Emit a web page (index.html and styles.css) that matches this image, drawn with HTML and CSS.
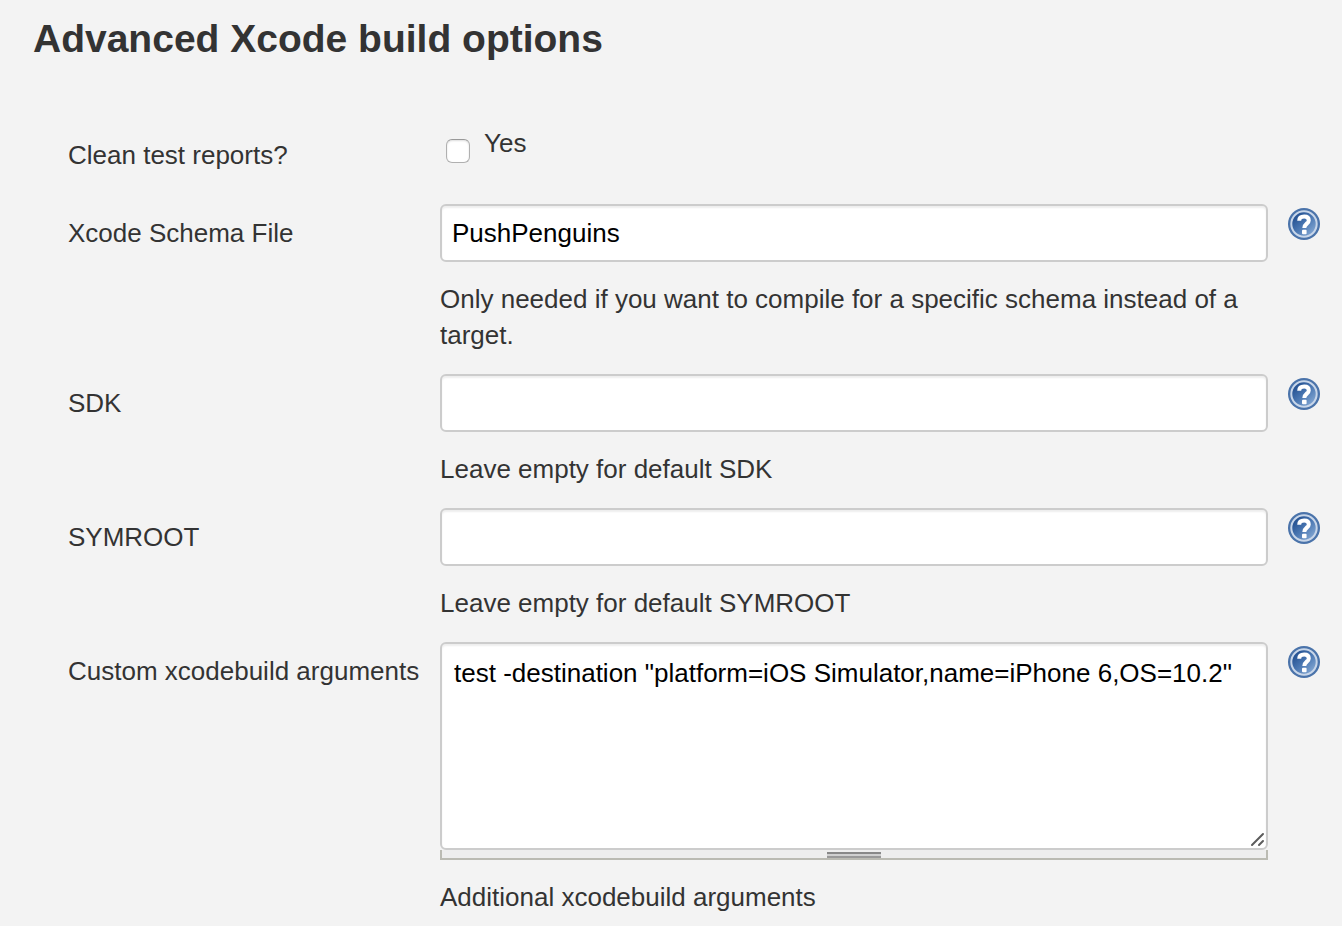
FILE: index.html
```html
<!DOCTYPE html>
<html lang="en">
<head>
<meta charset="utf-8">
<title>Advanced Xcode build options</title>
<link rel="stylesheet" href="styles.css">
</head>
<body>
<svg class="defs" width="0" height="0" aria-hidden="true">
  <defs>
    <linearGradient id="help-fill" x1="0" y1="0" x2="1" y2="1">
      <stop offset="0.15" stop-color="#224f90"/>
      <stop offset="0.5" stop-color="#4a77b2"/>
      <stop offset="0.9" stop-color="#86a9d4"/>
    </linearGradient>
    <symbol id="help-icon" viewBox="0 0 32 32">
      <circle cx="16" cy="16" r="16" fill="#4a73aa"/>
      <circle cx="16" cy="16" r="12.700" fill="url(#help-fill)" stroke="#c8d6e9" stroke-width="2"/>
      <path d="M11.200 12.800C11.200 9.600 13.200 8.600 16.200 8.600C19.400 8.600 20.800 10.200 20.800 12.400C20.800 15.600 16.300 15.800 16.300 20" fill="none" stroke="#fff" stroke-width="4"/>
      <rect x="14" y="21.800" width="4.600" height="4.400" rx="1" fill="#fff"/>
    </symbol>
  </defs>
</svg>
<main class="page">
  <h1 class="title">Advanced Xcode build options</h1>
  <form class="options">
    <div class="row row-check">
      <span class="label" id="clean-label">Clean test reports?</span>
      <div class="field">
        <label class="check"><input class="checkbox" type="checkbox" aria-describedby="clean-label"><span>Yes</span></label>
      </div>
    </div>
    <div class="row">
      <label class="label" for="schema">Xcode Schema File</label>
      <div class="field">
        <input class="text" id="schema" type="text" value="PushPenguins">
        <p class="hint">Only needed if you want to compile for a specific schema instead of a target.</p>
      </div>
      <button class="help" type="button" aria-label="Help for Xcode Schema File"><svg class="help-image"><use href="#help-icon"/></svg></button>
    </div>
    <div class="row">
      <label class="label" for="sdk">SDK</label>
      <div class="field">
        <input class="text" id="sdk" type="text">
        <p class="hint">Leave empty for default SDK</p>
      </div>
      <button class="help" type="button" aria-label="Help for SDK"><svg class="help-image"><use href="#help-icon"/></svg></button>
    </div>
    <div class="row">
      <label class="label" for="symroot">SYMROOT</label>
      <div class="field">
        <input class="text" id="symroot" type="text">
        <p class="hint">Leave empty for default SYMROOT</p>
      </div>
      <button class="help" type="button" aria-label="Help for SYMROOT"><svg class="help-image"><use href="#help-icon"/></svg></button>
    </div>
    <div class="row">
      <label class="label" for="arguments">Custom xcodebuild arguments</label>
      <div class="field">
        <div class="area-wrap">
          <textarea class="text area" id="arguments" spellcheck="false">test -destination "platform=iOS Simulator,name=iPhone 6,OS=10.2"</textarea>
          <svg class="grip" viewBox="0 0 16 16" aria-hidden="true"><path d="M2 13L13 2M9 13L13 9" fill="none" stroke="#5c5c5c" stroke-width="2" stroke-linecap="round"/></svg>
        </div>
        <div class="handle"><span class="handle-bar"></span></div>
        <p class="hint">Additional xcodebuild arguments</p>
      </div>
      <button class="help" type="button" aria-label="Help for Custom xcodebuild arguments"><svg class="help-image"><use href="#help-icon"/></svg></button>
    </div>
  </form>
</main>
</body>
</html>
```
FILE: styles.css
```css
* {
  box-sizing: border-box;
}

body {
  margin: 0;
  background: #f3f3f3;
  color: #333;
  font: 26px/36px "Liberation Sans", Arial, sans-serif;
}

.defs {
  position: absolute;
}

.page {
  padding: 15px 22px 0 33px;
}

.title {
  margin: 0 0 62px;
  font-size: 39px;
  line-height: 48px;
}

.options {
  display: flex;
  flex-direction: column;
  gap: 21px;
  padding-left: 35px;
}

.row {
  display: grid;
  grid-template-columns: 352px minmax(0, 1fr) 32px;
  column-gap: 20px;
  align-items: start;
}

.row-check {
  min-height: 58px;
}

.label {
  padding-top: 11px;
  white-space: nowrap;
}

.row-check .label {
  padding-top: 12px;
}

.check {
  display: inline-flex;
  align-items: flex-start;
  gap: 14px;
  padding-left: 6px;
}

.checkbox {
  appearance: none;
  width: 24px;
  height: 24px;
  margin: 14px 0 0;
  border: 1px solid #b0b0b0;
  border-top-color: #999;
  border-radius: 6px;
  background: #fff;
  box-shadow: inset 0 1px 2px #ddd;
}

.checkbox:checked {
  background: #3b67a3;
}

.text {
  display: block;
  width: 100%;
  height: 58px;
  margin: 0;
  padding: 0 10px;
  border: 2px solid #ccc;
  border-radius: 6px;
  background: #fff;
  box-shadow: inset 0 2px 2px #eee;
  color: #000;
  font: inherit;
}

.area-wrap {
  position: relative;
}

.area {
  height: 208px;
  padding: 11px 12px;
  resize: none;
}

.grip {
  position: absolute;
  right: 2px;
  bottom: 2px;
  width: 16px;
  height: 16px;
}

.handle {
  display: flex;
  justify-content: center;
  height: 10px;
  padding-top: 2px;
  border: 2px solid #bbbbb3;
  border-top: 0;
  background: #eee;
}

.handle-bar {
  width: 54px;
  height: 6px;
  background: linear-gradient(#888 0 2px, #d0d0d0 2px 4px, #999 4px 6px);
}

.hint {
  margin: 19px 0 0;
}

.help {
  width: 32px;
  height: 32px;
  margin: 4px 0 0;
  padding: 0;
  border: 0;
  background: none;
}

.help-image {
  display: block;
  width: 32px;
  height: 32px;
}
```
